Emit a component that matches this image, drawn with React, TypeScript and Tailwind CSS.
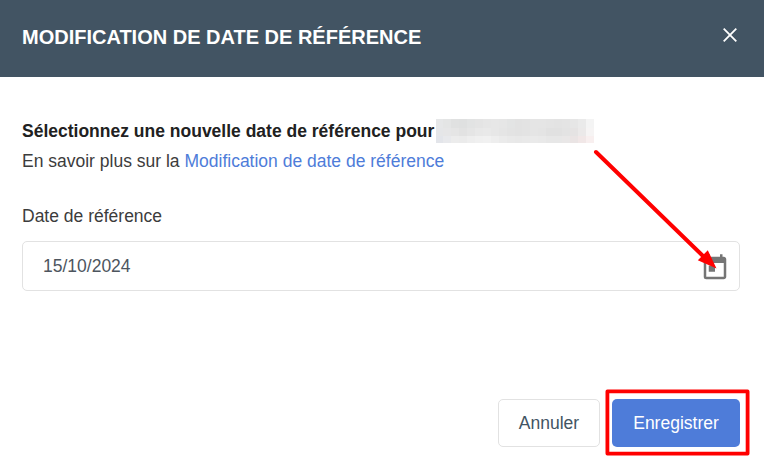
import React from 'react';
import { MdToday } from 'react-icons/md';

// Tints of the masked name, one row per line of blocks
const maskRows = [
  { height: 'h-[9px]', tints: ['#e6e7e8', '#e4e5e5', '#e0e1e1', '#dfe0e0', '#e2e3e3', '#e4e4e4', '#e6e6e6', '#e7e7e7', '#e6e6e6', '#e3e4e4', '#e2e2e2', '#e3e3e3', '#e5e5e5', '#e5e5e5', '#e4e4e4', '#e3e3e3', '#e4e4e4', '#e6e6e6', '#eaeaea', '#f4f4f4'] },
  { height: 'h-[8px]', tints: ['#e5e6e8', '#e6e6e7', '#e5e5e5', '#e2e2e2', '#e5e5e5', '#e8e8e8', '#e9e9e9', '#e7e7e7', '#e5e5e5', '#e3e3e3', '#e2e2e2', '#e3e3e3', '#e5e5e5', '#e4e4e4', '#e1e1e1', '#e1e1e1', '#e3e3e3', '#e5e3e3', '#ebe9e9', '#f6f4f4'] },
  { height: 'h-[7px]', tints: ['#e3e5ea', '#e8e9ec', '#ececec', '#ebebeb', '#eeeeee', '#f0f0f0', '#f1f1f1', '#eeeeee', '#ebebeb', '#e9e9e9', '#e8e8e8', '#e9e9e9', '#eaeaea', '#e9e9e9', '#e7e7e7', '#e7e7e7', '#e9e7e7', '#eae4e4', '#f1e7e7', '#f8efef'] },
];

const MaskedName: React.FC = () => (
  <div className="flex w-[158px] flex-col">
    {maskRows.map((row, i) => (
      <div key={i} className={`flex ${row.height}`}>
        {row.tints.map((tint, j) => (
          <span key={j} className="flex-1" style={{ backgroundColor: tint }} />
        ))}
      </div>
    ))}
  </div>
);

export default function App() {
  return (
    <div
      role="dialog"
      className="relative flex h-[468px] w-[764px] flex-col overflow-hidden bg-white font-['Liberation_Sans',Arial,sans-serif] text-[17.5px] text-[#3c3c3c]"
    >
      <header className="flex h-[77px] items-center justify-between bg-[#425463] pr-[27px] pb-1 pl-[22px] text-white">
        <h1 className="text-[20px] leading-6 font-bold whitespace-nowrap">MODIFICATION DE DATE DE RÉFÉRENCE</h1>
        <button aria-label="Fermer" className="-mt-1">
          <svg className="h-[14px] w-[14px]" viewBox="0 0 14 14" fill="none" stroke="currentColor" strokeWidth="1.8">
            <path d="M.7.7l12.6 12.6M13.3.7L.7 13.3" />
          </svg>
        </button>
      </header>

      <main className="flex flex-col pt-[42px] pr-6 pl-[22px]">
        <div className="flex h-6 items-center">
          <p className="w-[413.5px] leading-6 font-bold whitespace-nowrap text-[#212121]">
            Sélectionnez une nouvelle date de référence pour
          </p>
          <MaskedName />
        </div>
        <p className="mt-[6px] leading-6 whitespace-nowrap">
          En savoir plus sur la{' '}
          <a href="#" className="text-[#4e7cd9]">Modification de date de référence</a>
        </p>
        <label className="mt-[31px] leading-6">Date de référence</label>
        <div className="mt-[13px] flex h-[50px] items-center justify-between rounded-[5px] border border-[#e2e2e2] pr-[9px] pl-[20px] text-[#4d555e]">
          <span className="leading-6">15/10/2024</span>
          <MdToday className="mt-[3px] size-[30px] text-[#757575]" />
        </div>
      </main>

      <footer className="mt-[108px] flex justify-end gap-3 pr-6">
        <button className="h-12 w-[102px] rounded-[5px] border border-[#e2e2e2] text-[#425463]">Annuler</button>
        <button className="h-12 w-32 rounded-[5px] bg-[#4e7cd9] text-white">Enregistrer</button>
      </footer>

      {/* Annotations: arrow to the calendar and frame round the save button */}
      <svg className="pointer-events-none absolute inset-0" width="764" height="468" fill="none">
        <path d="M596 152L704 257" stroke="#ff0000" strokeWidth="4" strokeLinecap="round" />
        <path d="M716.500 268.500L697.800 260.300L707.800 250.200Z" fill="#ff0000" />
        <rect x="607.4" y="391.4" width="140.2" height="62.2" stroke="#ff0000" strokeWidth="3.8" strokeLinejoin="round" />
      </svg>
    </div>
  );
}
